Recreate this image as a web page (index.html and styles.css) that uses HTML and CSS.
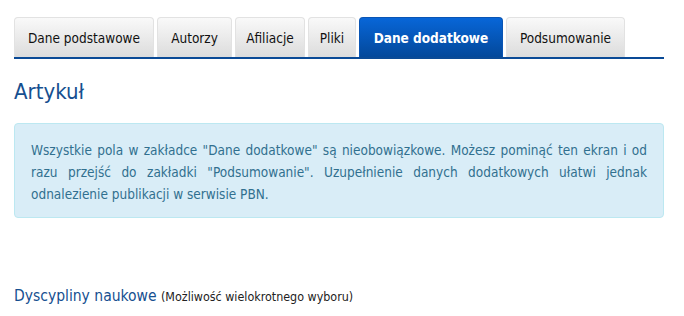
FILE: index.html
```html
<!DOCTYPE html>
<html lang="pl">
<head>
<meta charset="utf-8">
<link rel="stylesheet" href="styles.css">
</head>
<body>
<div class="page">
  <ul class="tabs">
    <li class="tab tab-basic">Dane podstawowe</li>
    <li class="tab tab-authors">Autorzy</li>
    <li class="tab tab-affil">Afiliacje</li>
    <li class="tab tab-files">Pliki</li>
    <li class="tab tab-extra active">Dane dodatkowe</li>
    <li class="tab tab-summary">Podsumowanie</li>
  </ul>
  <h1 class="title">Artykuł</h1>
  <div class="alert">Wszystkie pola w zakładce "Dane dodatkowe" są nieobowiązkowe. Możesz pominąć ten ekran i od razu przejść do zakładki "Podsumowanie". Uzupełnienie danych dodatkowych ułatwi jednak odnalezienie publikacji w serwisie PBN.</div>
  <h2 class="section">Dyscypliny naukowe <small class="hint">(Możliwość wielokrotnego wyboru)</small></h2>
</div>
</body>
</html>
```
FILE: styles.css
```css
* { box-sizing: border-box; }
html, body { margin: 0; padding: 0; background: #fff; }
body {
  font-family: "DejaVu Sans Condensed", "DejaVu Sans", sans-serif;
  font-size: 13px;
  color: #222;
}
.page {
  width: 650px;
  margin-left: 14px;
  padding-top: 17px;
}
.tabs {
  list-style: none;
  margin: 0;
  padding: 0;
  display: flex;
  gap: 3px;
  border-bottom: 2px solid #0a4a96;
}
.tab {
  height: 40px;
  display: flex;
  align-items: center;
  justify-content: center;
  white-space: nowrap;
  border: 1px solid #e2e2e2;
  border-bottom: none;
  border-radius: 4px 4px 0 0;
  background: linear-gradient(#f9f9f9, #dcdcdc);
  color: #111;
  font-size: 13.5px;
}
.tab-basic { width: 140px; }
.tab-authors { width: 75px; }
.tab-affil { width: 70px; }
.tab-files { width: 48px; }
.tab-extra { width: 144px; }
.tab-summary { width: 119px; }
.tab.active {
  background: linear-gradient(#0866d8, #03489a);
  border-color: #0a55b4;
  color: #fff;
  font-weight: bold;
}
.title {
  margin: 20px 0 0;
  font-weight: normal;
  font-size: 22px;
  line-height: 26px;
  color: #164f90;
}
.alert {
  margin-top: 18px;
  padding: 15px 16px 12px 16px;
  background: #d9edf7;
  border: 1px solid #bce8f1;
  border-radius: 4px;
  color: #31708f;
  text-align: justify;
  font-size: 13.5px;
  line-height: 22px;
}
.section {
  margin: 68px 0 0;
  font-weight: normal;
  font-size: 15.5px;
  line-height: 20px;
  color: #164f90;
}
.hint {
  font-size: 12.4px;
  color: #222;
}
```
